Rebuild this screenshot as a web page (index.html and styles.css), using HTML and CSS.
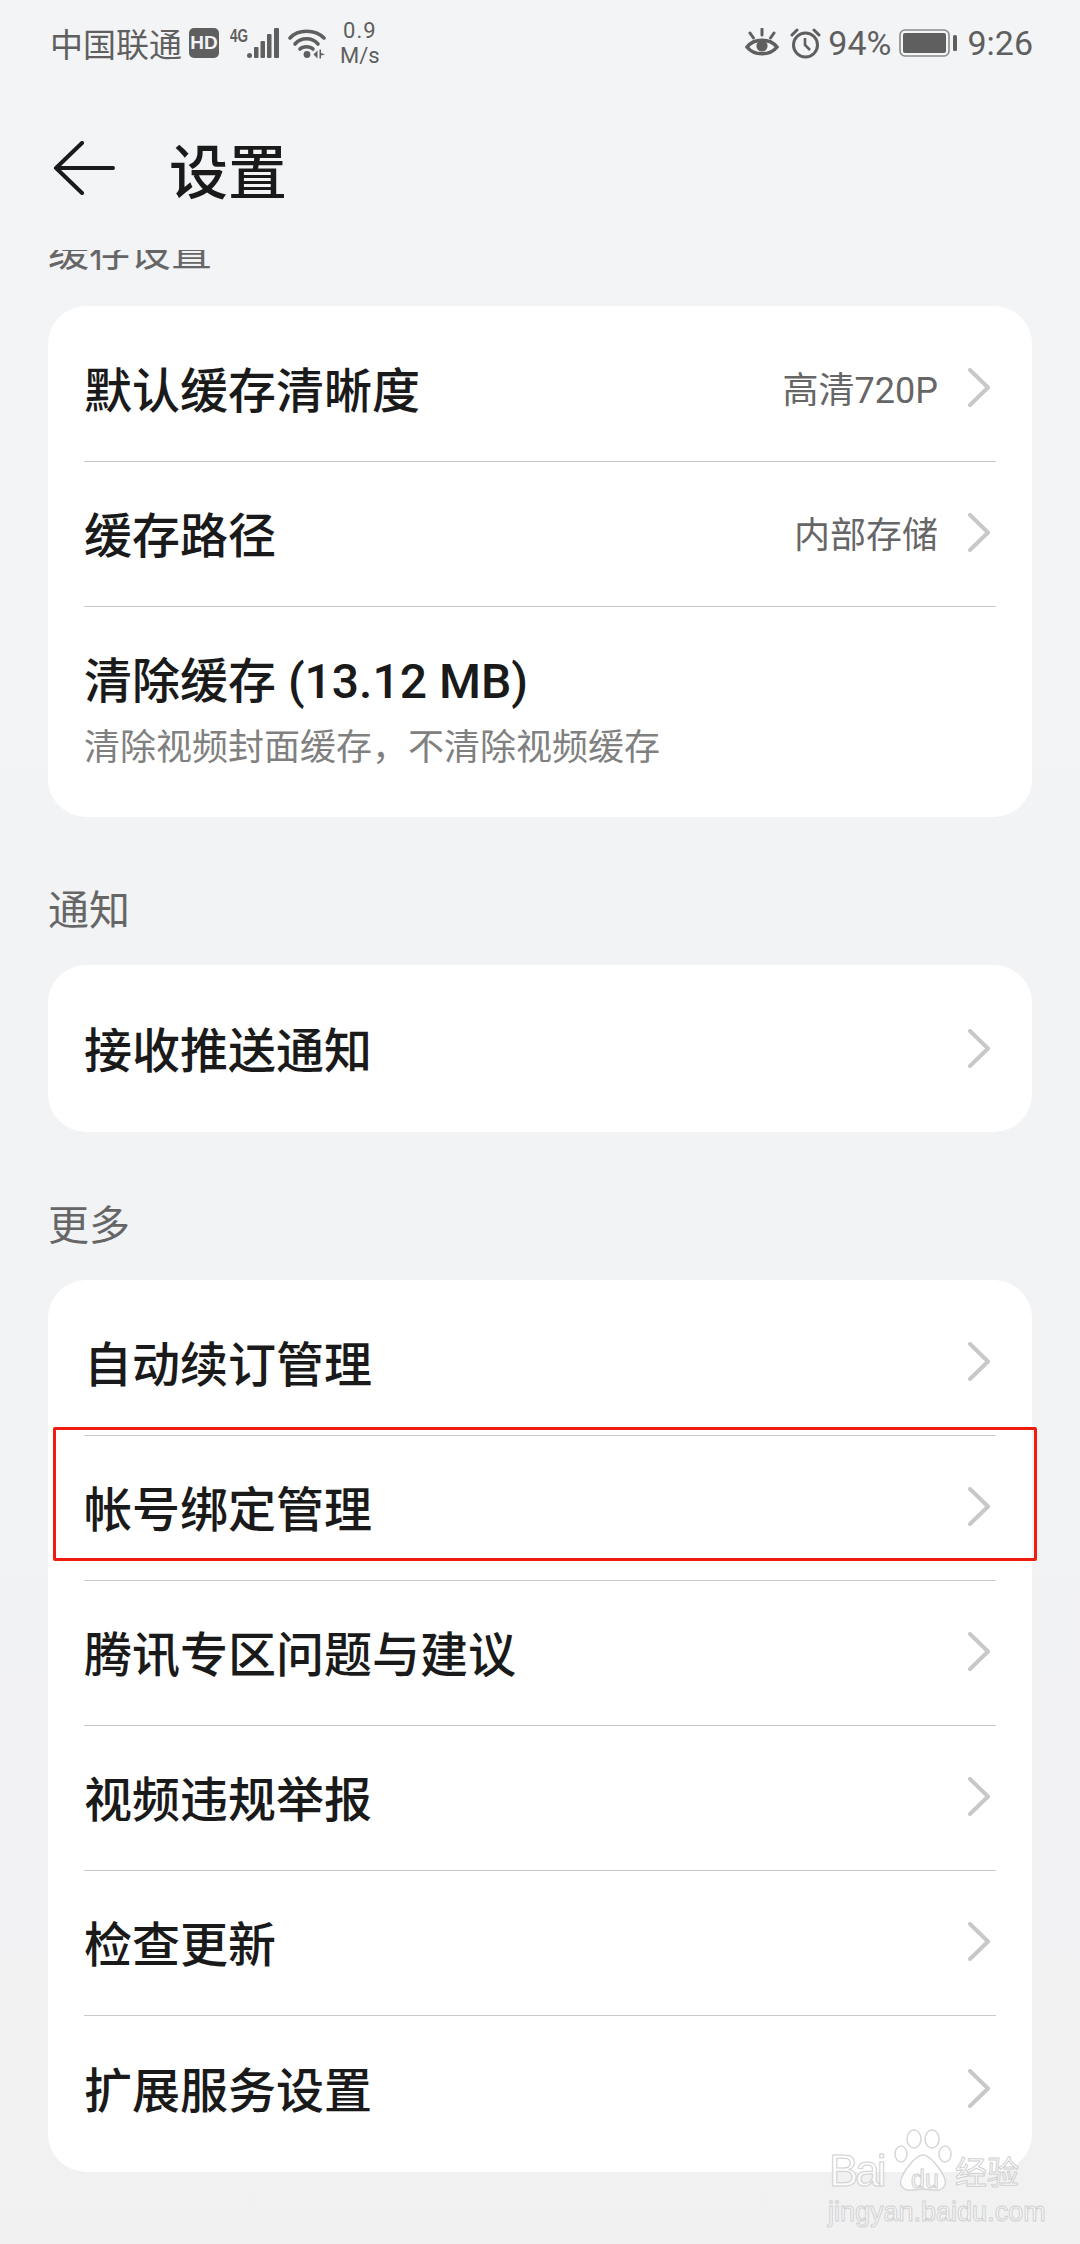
FILE: index.html
```html
<!DOCTYPE html>
<html lang="zh-CN">

<head>
    <meta charset="utf-8" />
    <title>设置</title>
    <link rel="stylesheet" href="styles.css">
</head>

<body>
    <div class="status-bar">
        <div class="status-left">
            <span class="carrier">中国联通</span>
            <span class="hd">HD</span>
            <svg class="signal" width="50" height="31" viewBox="0 0 50 31">
                <text x="0" y="14" class="signal-label" textLength="18" lengthAdjust="spacingAndGlyphs">4G</text>
                <rect x="17" y="25" width="5" height="5" rx="2.500" fill="#5f5f5f"/>
                <rect x="24" y="19" width="4.500" height="11" rx="1" fill="#5f5f5f"/>
                <rect x="30.500" y="13" width="4.500" height="17" rx="1" fill="#5f5f5f"/>
                <rect x="37" y="6" width="4.500" height="24" rx="1" fill="#5f5f5f"/>
                <rect x="44" y="0" width="5" height="30" rx="1" fill="#5f5f5f"/>
            </svg>
            <svg class="wifi" width="38" height="31" viewBox="0 0 38 31">
                <path d="M2 10 C10 1 27 1 36 10" fill="none" stroke="#5f5f5f" stroke-width="3.600" stroke-linecap="round"/>
                <path d="M7 16 C13 9 24 9 30 16" fill="none" stroke="#5f5f5f" stroke-width="3.600" stroke-linecap="round"/>
                <path d="M12 21 C15 18 22 18 25 21" fill="none" stroke="#5f5f5f" stroke-width="3.600" stroke-linecap="round"/>
                <circle cx="19" cy="26.500" r="3.400" fill="#5f5f5f"/>
                <path d="M25.500 26.500 L29.500 22.500 V30.500 Z M31.500 21.500 L31.500 30.500 L33 30.500 L33 27.500 L37 26.500 L33 25 L33 21.500 Z" fill="#5f5f5f"/>
            </svg>
            <span class="speed"><span class="speed-num">0.9</span><span>M/s</span></span>
        </div>
        <div class="status-right">
            <svg width="34" height="30" viewBox="0 0 34 30">
                <path d="M2 19 C9 10 25 10 32 19 C25 28 9 28 2 19 Z" fill="none" stroke="#5f5f5f" stroke-width="3.600"/>
                <circle cx="17" cy="18" r="5.600" fill="#5f5f5f"/>
                <path d="M17 1 V7 M5 5 L8.500 10 M29 5 L25.500 10" stroke="#5f5f5f" stroke-width="3" stroke-linecap="round"/>
            </svg>
            <svg class="alarm" width="31" height="31" viewBox="0 0 31 31">
                <circle cx="15.500" cy="17" r="12" fill="none" stroke="#5f5f5f" stroke-width="3"/>
                <path d="M15 10 V17 L20 22" fill="none" stroke="#5f5f5f" stroke-width="2.600"/>
                <path d="M2 7 L7 2 M29 7 L24 2" stroke="#5f5f5f" stroke-width="3" stroke-linecap="round"/>
            </svg>
            <span class="percent">94%</span>
            <svg class="battery" width="59" height="28" viewBox="0 0 59 28">
                <rect x="1" y="1" width="49" height="26" rx="5" fill="none" stroke="#8a8a8a" stroke-width="1.600"/>
                <rect x="4" y="4" width="43" height="20" rx="2" fill="#5f5f5f"/>
                <rect x="54" y="6" width="4" height="16" rx="1.500" fill="#5f5f5f"/>
            </svg>
            <span class="clock">9:26</span>
        </div>
    </div>

    <div class="app-bar">
        <svg width="62" height="54" viewBox="0 0 62 54">
            <path d="M60 27 H3 M29 2 L3 27 L29 52" fill="none" stroke="#1a1a1a" stroke-width="4" stroke-linecap="round" stroke-linejoin="round"/>
        </svg>
        <h1>设置</h1>
    </div>

    <div class="scroller">
        <div class="list">
            <h2 class="section-label">缓存设置</h2>
            <div class="card">
                <div class="row">
                    <span class="row-title">默认缓存清晰度</span>
                    <span class="row-value">高清720P</span>
                    <svg class="chevron" width="23" height="39" viewBox="0 0 23 39"><path d="M2 2 L20 19.500 L2 37"/></svg>
                </div>
                <div class="row">
                    <span class="row-title">缓存路径</span>
                    <span class="row-value">内部存储</span>
                    <svg class="chevron" width="23" height="39" viewBox="0 0 23 39"><path d="M2 2 L20 19.500 L2 37"/></svg>
                </div>
                <div class="row row-tall">
                    <span class="row-title">清除缓存 (13.12 MB)</span>
                    <span class="row-sub">清除视频封面缓存，不清除视频缓存</span>
                </div>
            </div>

            <h2 class="section-label">通知</h2>
            <div class="card">
                <div class="row">
                    <span class="row-title">接收推送通知</span>
                    <svg class="chevron" width="23" height="39" viewBox="0 0 23 39"><path d="M2 2 L20 19.500 L2 37"/></svg>
                </div>
            </div>

            <h2 class="section-label">更多</h2>
            <div class="card">
                <div class="row">
                    <span class="row-title">自动续订管理</span>
                    <svg class="chevron" width="23" height="39" viewBox="0 0 23 39"><path d="M2 2 L20 19.500 L2 37"/></svg>
                </div>
                <div class="row">
                    <span class="row-title">帐号绑定管理</span>
                    <svg class="chevron" width="23" height="39" viewBox="0 0 23 39"><path d="M2 2 L20 19.500 L2 37"/></svg>
                    <div class="red-box"></div>
                </div>
                <div class="row">
                    <span class="row-title">腾讯专区问题与建议</span>
                    <svg class="chevron" width="23" height="39" viewBox="0 0 23 39"><path d="M2 2 L20 19.500 L2 37"/></svg>
                </div>
                <div class="row">
                    <span class="row-title">视频违规举报</span>
                    <svg class="chevron" width="23" height="39" viewBox="0 0 23 39"><path d="M2 2 L20 19.500 L2 37"/></svg>
                </div>
                <div class="row">
                    <span class="row-title">检查更新</span>
                    <svg class="chevron" width="23" height="39" viewBox="0 0 23 39"><path d="M2 2 L20 19.500 L2 37"/></svg>
                </div>
                <div class="row">
                    <span class="row-title">扩展服务设置</span>
                    <svg class="chevron" width="23" height="39" viewBox="0 0 23 39"><path d="M2 2 L20 19.500 L2 37"/></svg>
                </div>
            </div>
        </div>
    </div>

    <div class="watermark">
        <div class="wm-logo">
            <svg class="wm-paw" width="58" height="64" viewBox="0 0 58 64">
                <g fill="#ffffff" fill-opacity="0.75" stroke="#d6d6d6" stroke-width="1.500">
                    <ellipse cx="7" cy="25" rx="6" ry="8"/>
                    <ellipse cx="20" cy="10" rx="7" ry="9"/>
                    <ellipse cx="38" cy="10" rx="7" ry="9"/>
                    <ellipse cx="51" cy="25" rx="6" ry="8"/>
                    <path d="M29 26 C37 26 54 48 51 56 C47 65 35 60 29 60 C23 60 11 65 7 56 C4 48 21 26 29 26 Z"/>
                </g>
            </svg>
            <span class="wm-bai">Bai</span>
            <span class="wm-du">du</span>
            <span class="wm-cn">经验</span>
        </div>
        <div class="wm-url">jingyan.baidu.com</div>
    </div>
</body>
</html>
```

FILE: styles.css
```css
* {
    box-sizing: border-box;
}

body {
    width: 1080px;
    height: 2244px;
    margin: 0;
    overflow: hidden;
    position: relative;
    background: linear-gradient(#f3f4f6, #f2f3f5 50%, #f1f1f2);
    color: #1a1a1a;
    font-family: Roboto, "Noto Sans CJK SC", sans-serif;
}

.status-bar {
    display: flex;
    justify-content: space-between;
    align-items: center;
    height: 86px;
    padding: 0 47px 0 50px;
    color: #5f5f5f;
}

.status-left,
.status-right {
    display: flex;
    align-items: center;
}

.carrier {
    font-size: 33px;
}

.hd {
    width: 30px;
    height: 30px;
    margin-left: 7px;
    background: #5f5f5f;
    border-radius: 5px;
    color: #f2f3f5;
    font-family: "Liberation Sans", sans-serif;
    font-size: 19px;
    font-weight: 700;
    line-height: 30px;
    text-align: center;
}

.signal {
    margin-left: 11px;
}

.signal-label {
    fill: #5f5f5f;
    font-family: "Liberation Sans", sans-serif;
    font-size: 18px;
    font-weight: 700;
}

.wifi {
    margin-left: 8px;
}

.speed {
    display: flex;
    flex-direction: column;
    align-items: center;
    margin-left: 14px;
    font-size: 22px;
    line-height: 25px;
}

.speed-num {
    letter-spacing: 1px;
}

.status-right .alarm {
    margin-left: 11px;
}

.percent {
    margin-left: 7px;
    font-size: 34px;
}

.battery {
    margin-left: 8px;
}

.clock {
    margin-left: 9px;
    font-size: 34px;
}

.app-bar {
    display: flex;
    align-items: center;
    height: 164px;
    padding-left: 53px;
}

.app-bar h1 {
    margin: 0 0 0 54px;
    font-size: 59px;
    font-weight: 500;
}

.scroller {
    height: 1994px;
    overflow: hidden;
}

.list {
    margin-top: -92px;
    padding: 0 48px;
}

.section-label {
    height: 148px;
    margin: 0;
    padding-top: 74px;
    color: #666;
    font-size: 41px;
    font-weight: 400;
    line-height: 40px;
}

.card {
    padding: 11px 0 9px;
    background: #fff;
    border-radius: 38px;
}

.row {
    display: flex;
    align-items: center;
    position: relative;
    height: 145px;
    margin: 0 36px;
    padding-bottom: 5px;
    border-bottom: 1px solid #c8c8c8;
}

.row:last-child {
    height: 147px;
    border-bottom: 0;
}

.row.row-tall {
    flex-direction: column;
    align-items: flex-start;
    justify-content: center;
    height: 201px;
    padding: 10px 0 0;
}

.row-title {
    flex: 1;
    font-size: 48px;
    font-weight: 500;
}

.row-tall .row-title {
    flex: none;
    line-height: 70px;
}

.row-value {
    margin-right: 30px;
    color: #666;
    font-size: 36px;
}

.row-sub {
    color: #808080;
    font-size: 36px;
    line-height: 62px;
}

.chevron {
    margin: 2px 5px 0 0;
    fill: none;
    stroke: #c8c8c8;
    stroke-width: 4;
    stroke-linecap: round;
    stroke-linejoin: round;
}

/* annotation drawn on top of the screenshot */
.red-box {
    position: absolute;
    top: -9px;
    left: -31px;
    width: 984px;
    height: 134px;
    border: 3px solid #f01c10;
    border-radius: 2px;
}

.watermark {
    position: absolute;
    left: 828px;
    top: 2129px;
    width: 200px;
    color: rgba(255, 255, 255, 0.8);
    -webkit-text-stroke: 1px #d0d0d0;
}

.wm-logo {
    position: relative;
    height: 64px;
}

.wm-bai {
    position: absolute;
    left: 1px;
    top: 20px;
    font-family: "Liberation Sans", sans-serif;
    font-size: 44px;
    letter-spacing: -3px;
    line-height: 44px;
}

.wm-du {
    position: absolute;
    left: 83px;
    top: 38px;
    font-family: "Liberation Sans", sans-serif;
    font-size: 25px;
    line-height: 24px;
}

.wm-cn {
    position: absolute;
    left: 127px;
    top: 26px;
    font-size: 32px;
    line-height: 36px;
    white-space: nowrap;
}

.wm-paw {
    position: absolute;
    left: 66px;
    top: 0;
}

.wm-url {
    margin-top: 3px;
    font-family: "Liberation Sans", sans-serif;
    font-size: 27px;
    line-height: 32px;
    white-space: nowrap;
}
```
